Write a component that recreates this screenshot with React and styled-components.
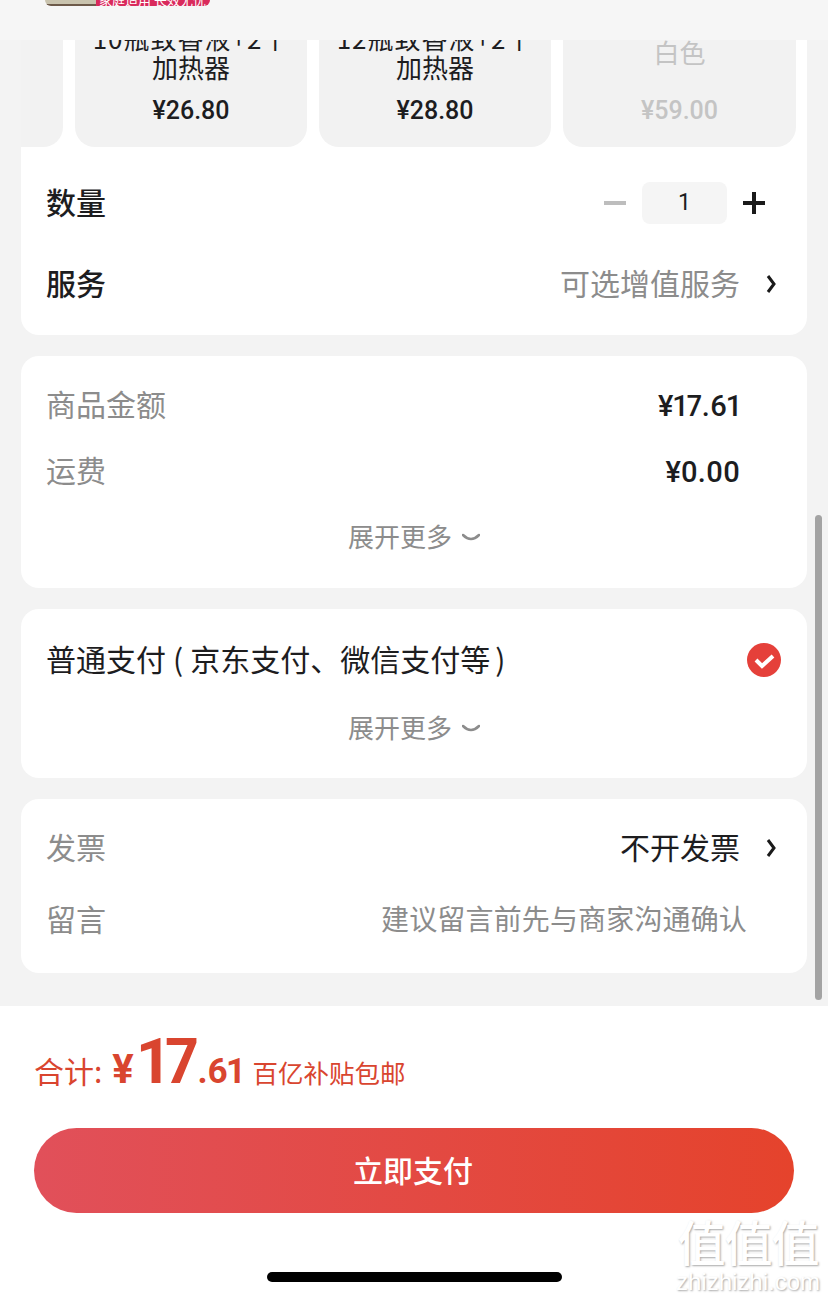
import React from 'react';
import styled, { createGlobalStyle } from 'styled-components';

const GlobalStyle = createGlobalStyle`
  html, body {
    margin: 0;
    padding: 0;
    background: #f3f3f3;
  }
  * {
    box-sizing: border-box;
  }
`;

const Page = styled.div`
  position: relative;
  width: 828px;
  height: 1299px;
  display: flex;
  flex-direction: column;
  overflow: hidden;
  font-family: "Noto Sans CJK SC", "Noto Sans", sans-serif;
  color: #1d1d1f;
`;

const TopBar = styled.div`
  height: 40px;
  flex: none;
  background: #f6f6f6;
  padding-left: 45px;
  overflow: hidden;
`;

const Thumb = styled.div`
  width: 165px;
  height: 6px;
  display: flex;
  border-radius: 0 0 6px 6px;
  overflow: hidden;
`;

const ThumbPhoto = styled.div`
  width: 51px;
  background: linear-gradient(#c9c3ae 0 60%, #6d5a4a 60%);
`;

const ThumbTag = styled.div`
  flex: 1;
  background: #d92a5c;
  color: #fff;
  font-size: 13px;
  line-height: 13px;
  margin-top: -7px;
  padding: 0 0 0 3px;
  white-space: nowrap;
`;

const Scroller = styled.div`
  flex: 1;
  min-height: 0;
  overflow: hidden;
  padding: 0 21px;
  display: flex;
  flex-direction: column;
  gap: 21px;
`;

const Card = styled.section`
  background: #fff;
  border-radius: ${p => (p.$flatTop ? '0 0 18px 18px' : '18px')};
  padding: ${p => p.$padding};
`;

const TileRow = styled.div`
  display: flex;
  gap: 12px;
  height: 107px;
  margin: 0 -15px 15px -26px;
`;

const Tile = styled.div`
  flex: none;
  width: ${p => p.$width}px;
  height: 107px;
  background: #f2f2f2;
  border-radius: ${p => (p.$cut ? '0 0 20px 0' : '0 0 20px 20px')};
  overflow: hidden;
  display: flex;
  flex-direction: column;
  align-items: center;
  color: ${p => (p.$off ? '#c4c4c4' : '#1d1d1f')};
`;

const TileName = styled.div`
  height: 55px;
  margin-top: -14px;
  margin-bottom: 1px;
  font-size: 26px;
  line-height: 29px;
  text-align: center;
  white-space: nowrap;
  display: flex;
  flex-direction: column;
  justify-content: flex-end;
  transform: translateY(${p => (p.$single ? -15 : 0)}px);
`;

const TileLine = styled.span`
  letter-spacing: ${p => (p.$wide ? 1 : 0)}px;
`;

const TilePrice = styled.div`
  margin-top: 15px;
  font-family: "Roboto", sans-serif;
  font-size: 25px;
  line-height: 28px;
  font-weight: 500;
`;

const Row = styled.div`
  display: flex;
  align-items: center;
  justify-content: space-between;
  height: ${p => p.$height}px;
`;

const RowTitle = styled.div`
  margin-left: -1px;
  font-size: 30px;
  line-height: 40px;
  padding-bottom: 4px;
  font-weight: ${p => (p.$strong ? 500 : 400)};
  color: ${p => (p.$muted ? '#8c8c8c' : '#1d1d1f')};
`;

const Stepper = styled.div`
  display: flex;
  align-items: center;
  gap: 16px;
  margin-right: 16px;
`;

const Qty = styled.div`
  width: 85px;
  height: 42px;
  border-radius: 8px;
  background: #f5f5f5;
  text-align: center;
  font-family: "Roboto", sans-serif;
  font-size: 23px;
  line-height: 42px;
`;

const RowValue = styled.div`
  display: flex;
  align-items: center;
  gap: 26px;
  padding-right: 5px;
  font-size: 30px;
  line-height: 40px;
  color: ${p => (p.$dark ? '#1d1d1f' : '#8c8c8c')};
`;

const ValueText = styled.span`
  padding-bottom: 4px;
`;

const Hint = styled.div`
  padding: 0 34px 4px 0;
  font-size: 28px;
  letter-spacing: 0.15px;
  line-height: 40px;
  color: #8c8c8c;
`;

const Amount = styled.div`
  padding: 2px 41px 0 0;
  font-family: "Roboto", sans-serif;
  font-variant-numeric: proportional-nums;
  font-size: 29px;
  font-weight: 500;
`;

const More = styled.div`
  display: flex;
  align-items: center;
  justify-content: center;
  gap: 10px;
  height: 40px;
  margin-top: ${p => p.$top}px;
  font-size: 26px;
  color: #8c8c8c;
`;

const MoreText = styled.span`
  padding-bottom: 4px;
`;

const CaretIcon = styled.svg`
  margin-top: 2px;
`;

const PayTitle = styled.div`
  margin-left: -1px;
  font-size: 30px;
  line-height: 40px;
  padding-bottom: 4px;
  white-space: nowrap;
`;

const Paren = styled.span`
  margin: ${p => p.$margin};
`;

const Footer = styled.footer`
  flex: none;
  height: 293px;
  background: #fff;
  padding: 19px 34px 0;
`;

const Total = styled.div`
  display: flex;
  align-items: baseline;
  height: 103px;
  color: #d9452f;
`;

const TotalLabel = styled.span`
  font-size: 30px;
  margin-right: 10px;
`;

const TotalPrice = styled.span`
  font-family: "Roboto", sans-serif;
  font-variant-numeric: proportional-nums;
  font-weight: 700;
  font-size: ${p => p.$size}px;
  letter-spacing: ${p => p.$tight || 0}px;
  margin: ${p => p.$margin || 0};
`;

const TotalNote = styled.span`
  font-size: 25.5px;
  margin-left: 9px;
`;

const PayButton = styled.button`
  display: block;
  width: 760px;
  height: 85px;
  padding: 0 2px 4px 0;
  border: 0;
  border-radius: 43px;
  background: linear-gradient(90deg, #e1505a, #e5432c);
  color: #fff;
  font-family: inherit;
  font-size: 30px;
  font-weight: 500;
`;

const HomeBar = styled.div`
  width: 295px;
  height: 10px;
  margin: 59px 0 0 233px;
  border-radius: 5px;
  background: #000;
`;

const ScrollThumb = styled.div`
  position: absolute;
  left: 815px;
  top: 515px;
  width: 7px;
  height: 485px;
  border-radius: 4px;
  background: #a3a3a3;
`;

const Watermark = styled.div`
  position: absolute;
  right: 8px;
  bottom: 4px;
  width: 144px;
  display: flex;
  flex-direction: column;
  align-items: center;
  color: #fff;
  text-shadow: 1px 1px 2px #a8a8a8;
`;

const MarkGlyphs = styled.div`
  font-size: 48px;
  font-weight: 500;
  line-height: 52px;
  letter-spacing: -1px;
  white-space: nowrap;
`;

const MarkUrl = styled.div`
  margin-top: 3px;
  font-family: "Liberation Sans", sans-serif;
  font-size: 24px;
  line-height: 26px;
`;

const Minus = () => (
  <svg width="22" height="22" viewBox="0 0 22 22">
    <path d="M0 11h22" stroke="#bdbdbd" strokeWidth="4" />
  </svg>
);

const Plus = () => (
  <svg width="22" height="22" viewBox="0 0 22 22">
    <path d="M0 11h22M11 0v22" stroke="#1a1a1a" strokeWidth="4" />
  </svg>
);

const Chevron = () => (
  <svg width="10" height="22" viewBox="0 0 10 22">
    <path d="M2 3l6 8-6 8" fill="none" stroke="#1a1a1a" strokeWidth="3" />
  </svg>
);

const Caret = () => (
  <CaretIcon width="18" height="10" viewBox="0 0 18 10">
    <path d="M1 2q8 8 16 0" fill="none" stroke="#8c8c8c" strokeWidth="2.5" strokeLinecap="round" />
  </CaretIcon>
);

const Check = () => (
  <svg width="34" height="34" viewBox="0 0 34 34">
    <circle cx="17" cy="17" r="17" fill="#e5403a" />
    <path d="M9 17l6 6 11-10" fill="none" stroke="#fff" strokeWidth="4" />
  </svg>
);

const App = () => {
  return (
    <Page>
      <GlobalStyle />
      <TopBar>
        <Thumb>
          <ThumbPhoto />
          <ThumbTag>家庭适用 长效无忧</ThumbTag>
        </Thumb>
      </TopBar>
      <Scroller>
        <Card $flatTop $padding="0 26px 11px">
          <TileRow>
            <Tile $width={42} $cut />
            <Tile $width={232}>
              <TileName>
                <TileLine $wide>10瓶致香液+2个</TileLine>
                <TileLine>加热器</TileLine>
              </TileName>
              <TilePrice>¥26.80</TilePrice>
            </Tile>
            <Tile $width={232}>
              <TileName>
                <TileLine $wide>12瓶致香液+2个</TileLine>
                <TileLine>加热器</TileLine>
              </TileName>
              <TilePrice>¥28.80</TilePrice>
            </Tile>
            <Tile $width={233} $off>
              <TileName $single>
                <TileLine>白色</TileLine>
              </TileName>
              <TilePrice>¥59.00</TilePrice>
            </Tile>
          </TileRow>
          <Row $height={81}>
            <RowTitle $strong>数量</RowTitle>
            <Stepper>
              <Minus />
              <Qty>1</Qty>
              <Plus />
            </Stepper>
          </Row>
          <Row $height={81}>
            <RowTitle $strong>服务</RowTitle>
            <RowValue>
              <ValueText>可选增值服务</ValueText>
              <Chevron />
            </RowValue>
          </Row>
        </Card>
        <Card $padding="16px 26px 31px">
          <Row $height={66}>
            <RowTitle $muted>商品金额</RowTitle>
            <Amount>¥17.61</Amount>
          </Row>
          <Row $height={66}>
            <RowTitle $muted>运费</RowTitle>
            <Amount>¥0.00</Amount>
          </Row>
          <More $top={13}>
            <MoreText>展开更多</MoreText>
            <Caret />
          </More>
        </Card>
        <Card $padding="31px 26px 30px">
          <Row $height={40}>
            <PayTitle>
              普通支付<Paren $margin="0 7px">(</Paren>京东支付、微信支付等<Paren $margin="0 0 0 5px">)</Paren>
            </PayTitle>
            <Check />
          </Row>
          <More $top={28}>
            <MoreText>展开更多</MoreText>
            <Caret />
          </More>
        </Card>
        <Card $padding="13px 26px 17px">
          <Row $height={72}>
            <RowTitle $muted>发票</RowTitle>
            <RowValue $dark>
              <ValueText>不开发票</ValueText>
              <Chevron />
            </RowValue>
          </Row>
          <Row $height={72}>
            <RowTitle $muted>留言</RowTitle>
            <Hint>建议留言前先与商家沟通确认</Hint>
          </Row>
        </Card>
      </Scroller>
      <Footer>
        <Total>
          <TotalLabel>合计:</TotalLabel>
          <TotalPrice $size={40}>¥</TotalPrice>
          <TotalPrice $size={63} $tight={-3} $margin="0 2px 0 4px">17</TotalPrice>
          <TotalPrice $size={35} $tight={-0.5}>.61</TotalPrice>
          <TotalNote>百亿补贴包邮</TotalNote>
        </Total>
        <PayButton>立即支付</PayButton>
        <HomeBar />
      </Footer>
      <ScrollThumb />
      <Watermark>
        <MarkGlyphs>值值值</MarkGlyphs>
        <MarkUrl>zhizhizhi.com</MarkUrl>
      </Watermark>
    </Page>
  );
};

export default App;
